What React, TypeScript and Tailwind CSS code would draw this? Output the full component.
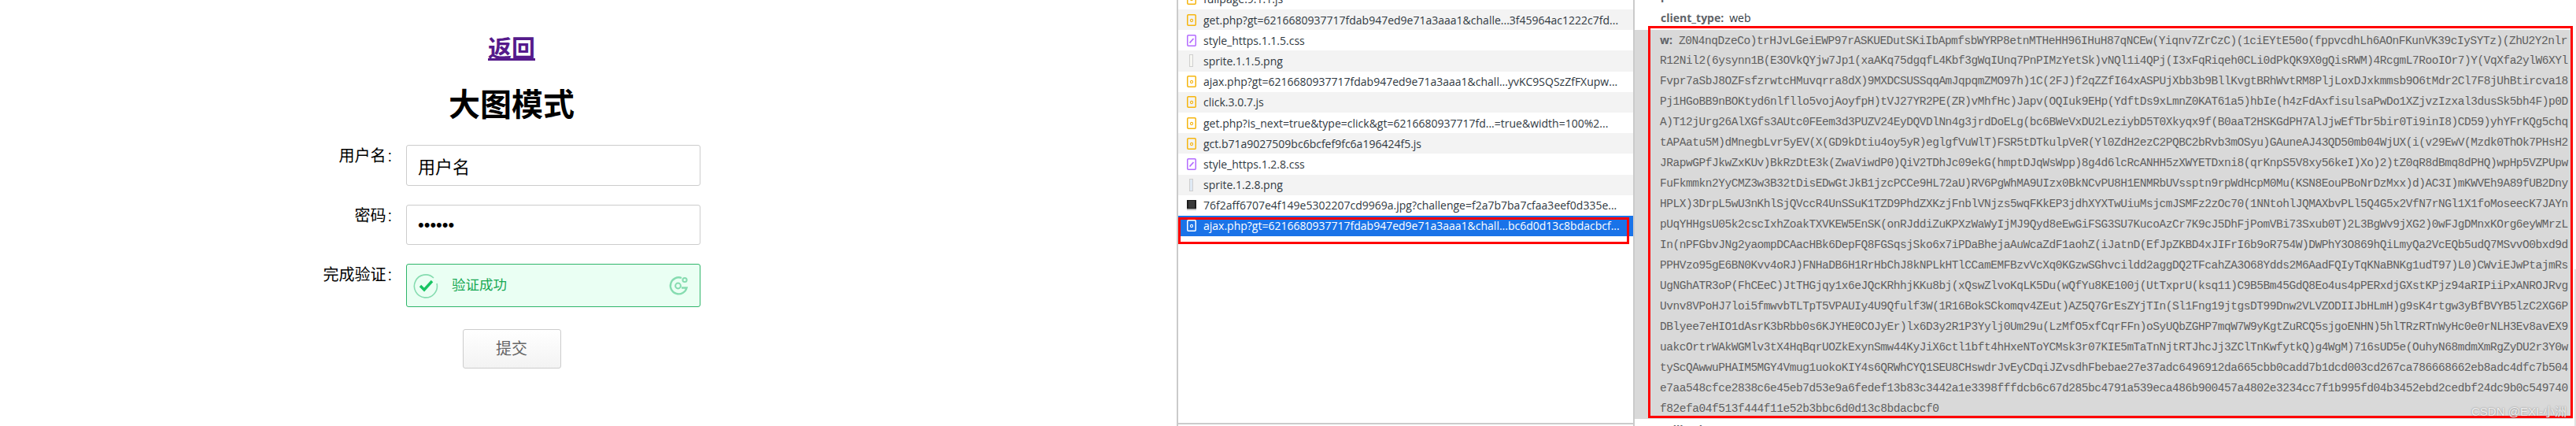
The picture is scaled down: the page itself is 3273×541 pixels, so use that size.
const cjk = 'font-["Liberation_Sans","Noto_Sans_CJK_SC",sans-serif]'

type FileKind = 'xhr' | 'css' | 'sprite' | 'sprite2' | 'jpg'

const files: { name: string; kind: FileKind }[] = [
  { name: 'fullpage.9.1.1.js', kind: 'xhr' },
  { name: 'get.php?gt=6216680937717fdab947ed9e71a3aaa1&challe...3f45964ac1222c7fd...', kind: 'xhr' },
  { name: 'style_https.1.1.5.css', kind: 'css' },
  { name: 'sprite.1.1.5.png', kind: 'sprite' },
  { name: 'ajax.php?gt=6216680937717fdab947ed9e71a3aaa1&chall...yvKC9SQSzZfFXupw...', kind: 'xhr' },
  { name: 'click.3.0.7.js', kind: 'xhr' },
  { name: 'get.php?is_next=true&type=click&gt=6216680937717fd...=true&width=100%2...', kind: 'xhr' },
  { name: 'gct.b71a9027509bc6bcfef9fc6a196424f5.js', kind: 'xhr' },
  { name: 'style_https.1.2.8.css', kind: 'css' },
  { name: 'sprite.1.2.8.png', kind: 'sprite2' },
  { name: '76f2aff6707e4f149e5302207cd9969a.jpg?challenge=f2a7b7ba7cfaa3eef0d335e...', kind: 'jpg' },
]

const payload = [
  'Z0N4nqDzeCo)trHJvLGeiEWP97rASKUEDutSKiIbApmfsbWYRP8etnMTHeHH96IHuH87qNCEw(Yiqnv7ZrCzC)(1ciEYtE50o(fppvcdhLh6AOnFKunVK39cIySYTz)(ZhU2Y2nlr',
  'R12Nil2(6ysynn1B(E3OVkQYjw7Jp1(xaAKq75dgqfL4Kbf3gWqIUnq7PnPIMzYetSk)vNQl1i4QPj(I3xFqRiqeh0CLi0dPkQK9X0gQisRWM)4RcgmL7RooIOr7)Y(VqXfa2ylW6XYl',
  'Fvpr7aSbJ8OZFsfzrwtcHMuvqrra8dX)9MXDCSUSSqqAmJqpqmZMO97h)1C(2FJ)f2qZZfI64xASPUjXbb3b9BllKvgtBRhWvtRM8PljLoxDJxkmmsb9O6tMdr2Cl7F8jUhBtircva18',
  'Pj1HGoBB9nBOKtyd6nlfllo5vojAoyfpH)tVJ27YR2PE(ZR)vMhfHc)Japv(OQIuk9EHp(YdftDs9xLmnZ0KAT61a5)hbIe(h4zFdAxfisulsaPwDo1XZjvzIzxal3dusSk5bh4F)p0D',
  'A)T12jUrg26AlXGfs3AUtc0FEem3d3PUZV24EyDQVDlNn4g3jrdDoELg(bc6BWeVxDU2LeziybD5T0Xkyqx9f(B0aaT2HSKGdPH7AlJjwEfTbr5bir0Ti9inI8)CD59)yhYFrKQg5chq',
  'tAPAatu5M)dMnegbLvr5yEV(X(GD9kDtiu4oy5yR)eglgfVuWlT)FSR5tDTkulpVeR(Yl0ZdH2ezC2PQBC2bRvb3mOSyu)GAuneAJ43QD50mb04WjUX(i(v29EwV(Mzdk0ThOk7PHsH2',
  'JRapwGPfJkwZxKUv)BkRzDtE3k(ZwaViwdP0)QiV2TDhJc09ekG(hmptDJqWsWpp)8g4d6lcRcANHH5zXWYETDxni8(qrKnpS5V8xy56keI)Xo)2)tZ0qR8dBmq8dPHQ)wpHp5VZPUpw',
  'FuFkmmkn2YyCMZ3w3B32tDisEDwGtJkB1jzcPCCe9HL72aU)RV6PgWhMA9UIzx0BkNCvPU8H1ENMRbUVssptn9rpWdHcpM0Mu(KSN8EouPBoNrDzMxx)d)AC3I)mKWVEh9A89fUB2Dny',
  'HPLX)3DrpL5wU3nKhlSjQVccR4UnSSuK1TZD9PhdZXKzjFnblVNjzs5wqFKkEP3jdhXYXTwUiuMsjcmJSMFz2zOc70(1NNtohlJQMAXbvPLl5Q4G5x2VfN7rNGl1X1foMoseecK7JAYn',
  'pUqYHHgsU05k2cscIxhZoakTXVKEW5EnSK(onRJddiZuKPXzWaWyIjMJ9Qyd8eEwGiFSG3SU7KucoAzCr7K9cJ5DhFjPomVBi73Sxub0T)2L3BgWv9jXG2)0wFJgDMnxKOrg6eyWMrzL',
  'In(nPFGbvJNg2yaompDCAacHBk6DepFQ8FGSqsjSko6x7iPDaBhejaAuWcaZdF1aohZ(iJatnD(EfJpZKBD4xJIFrI6b9oR754W)DWPhY3O869hQiLmyQa2VcEQb5udQ7MSvvO0bxd9d',
  'PPHVzo95gE6BN0Kvv4oRJ)FNHaDB6H1RrHbChJ8kNPLkHTlCCamEMFBzvVcXq0KGzwSGhvcildd2aggDQ2TFcahZA3O68Ydds2M6AadFQIyTqKNaBNKg1udT97)L0)CWviEJwPtajmRs',
  'UgNGhATR3oP(FhCEeC)JtTHGjqy1x6eJQcKRhhjKKu8bj(xQswZlvoKqLK5Du(wQfYu8KE100j(UtTxprU(ksq11)C9B5Bm45GdQ8Eo4us4pPERxdjGXstKPjz94aRIPiiPxANROJRvg',
  'Uvnv8VPoHJ7loi5fmwvbTLTpT5VPAUIy4U9Qfulf3W(1R16BokSCkomqv4ZEut)AZ5Q7GrEsZYjTIn(Sl1Fng19jtgsDT99Dnw2VLVZODIIJbHLmH)g9sK4rtgw3yBfBVYB5lzC2XG6P',
  'DBlyee7eHIO1dAsrK3bRbb0s6KJYHE0COJyEr)lx6D3y2R1P3Yylj0Um29u(LzMfO5xfCqrFFn)oSyUQbZGHP7mqW7W9yKgtZuRCQ5sjgoENHN)5hlTRzRTnWyHc0e0rNLH3Ev8avEX9',
  'uakcOrtrWAkWGMlv3tX4HqBqrUOZkExynSmw44KyJiX6ctl1bft4hHxeNToYCMsk3r07KIE5mTaTnNjtRTJhcJj3ZClTnKwfytkQ)g4WgM)716sUD5e(OuhyN68mdmXmRgZyDU2r3Y0w',
  'tyScQAwwuPHAIM5MGY4Vmug1uokoKIY4s6QRWhCYQ1SEU8CHswdrJvEyCDqiJZvsdhFbebae27e37adc6496912da665cbb0cadd7b1dcd003cd267ca786668662eb8adc4dfc7b504',
  'e7aa548cfce2838c6e45eb7d53e9a6fedef13b83c3442a1e3398fffdcb6c67d285bc4791a539eca486b900457a4802e3234cc7f1b995fd04b3452ebd2cedbf24dc9b0c549740',
  'f82efa04f513f444f11e52b3bbc6d0d13c8bdacbcf0',
]

function FileIcon({ kind, white }: { kind: FileKind; white?: boolean }) {
  if (kind === 'jpg') {
    return (
      <svg width="12" height="14" viewBox="0 0 12 14">
        <rect width="12" height="13" fill="#1d1d1d" />
        <rect x="2" y="1" width="8" height="9" fill="#3a3a3a" />
        <rect y="11" width="12" height="2" fill="#bdbdbd" />
      </svg>
    )
  }
  if (kind === 'sprite' || kind === 'sprite2') {
    return (
      <svg width="12" height="16" viewBox="0 0 12 16">
        <rect x="3.5" y="0.5" width="4" height="15" fill={kind === 'sprite2' ? '#dfe9f5' : '#f7f7f2'} stroke="#cfcfcf" />
      </svg>
    )
  }
  const color = white ? '#ffffff' : kind === 'css' ? '#b36bff' : '#f5b50f'
  return (
    <svg width="12" height="15" viewBox="0 0 12 15" fill="none">
      <rect x="0.75" y="0.75" width="10.5" height="13.5" rx="1.2" stroke={color} strokeWidth="1.5" />
      {kind === 'css' ? (
        <path d="M3.5 10.5 L8.5 5" stroke={color} strokeWidth="1.8" />
      ) : (
        <circle cx="6" cy="8" r="1.6" stroke={color} strokeWidth="1.1" />
      )}
    </svg>
  )
}

function FileRow({ name, kind, odd }: { name: string; kind: FileKind; odd: boolean }) {
  return (
    <div className={`flex h-[26.2px] items-center pl-[11px] ${odd ? 'bg-[#f3f3f3]' : 'bg-white'}`}>
      <div className="flex w-[21px] shrink-0 items-center">
        <FileIcon kind={kind} />
      </div>
      <span className="whitespace-nowrap text-[#303942]">{name}</span>
    </div>
  )
}

function SuccessIcon() {
  return (
    <svg width="32" height="32" viewBox="0 0 32 32" fill="none">
      <path d="M26 6 A14.5 14.5 0 1 0 30 13" stroke="#86dcb0" strokeWidth="1.6" />
      <path d="M9 16 L14 21 L24 10" stroke="#19c463" strokeWidth="3.4" />
    </svg>
  )
}

function RefreshIcon() {
  return (
    <svg width="26" height="26" viewBox="0 0 26 26" fill="none" stroke="#86dcb0">
      <path d="M17 3 A10.5 10.5 0 1 0 23.5 15.5 L17 15.5" strokeWidth="2.4" />
      <circle cx="12.5" cy="13" r="3.4" strokeWidth="2" />
      <circle cx="21" cy="5.5" r="2.6" strokeWidth="2" />
    </svg>
  )
}

function FormRow({ label, children, className }: { label: string; children: React.ReactNode; className?: string }) {
  return (
    <div className={`flex ${className ?? ''}`}>
      <label className="w-[498px] text-right text-[20px] leading-[29px] text-black">
        {label}
        <span className="ml-[2px]">:</span>
      </label>
      <div className="ml-[18px] w-[374px]">{children}</div>
    </div>
  )
}

function LoginForm() {
  return (
    <div className={`h-full w-[1495px] shrink-0 bg-white ${cjk}`}>
      <div className="h-[80px] w-[1300px] pt-[44px] text-center leading-[36px]">
        <a href="#" className="text-[30px] font-bold text-[#551a8b] underline">返回</a>
      </div>
      <h1 className="mt-[30px] w-[1300px] text-center text-[40px] font-bold leading-[46px] text-black">大图模式</h1>
      <FormRow label="用户名" className="mt-[28px]">
        <input
          readOnly
          value="用户名"
          className="block h-[52px] w-full rounded-[3px] border border-[#ccc] px-[14px] text-[22px] text-black outline-none"
        />
      </FormRow>
      <FormRow label="密码" className="mt-[24px]">
        <input
          readOnly
          type="password"
          value="123456"
          className="block h-[51px] w-full rounded-[3px] border border-[#ccc] px-[14px] text-[22px] text-black outline-none"
        />
      </FormRow>
      <FormRow label="完成验证" className="mt-[24px]">
        <div className="flex h-[55px] items-center rounded-[3px] border border-[#2fb56a] bg-[#eafff3] pl-[8px] pr-[14px]">
          <SuccessIcon />
          <span className="ml-[17px] text-[17.5px] text-[#18a853]">验证成功</span>
          <div className="ml-auto flex">
            <RefreshIcon />
          </div>
        </div>
      </FormRow>
      <div className="mt-[28px] flex w-[1300px] justify-center">
        <button className="h-[50px] w-[125px] rounded-[3px] border border-[#ccc] bg-gradient-to-b from-white to-[#f3f3f3] text-[20px] text-[#666]">
          提交
        </button>
      </div>
    </div>
  )
}

function NetworkList() {
  return (
    <div className='relative flex h-full w-[582px] shrink-0 flex-col border-x-2 border-[#cbcbcb] bg-white font-["Open_Sans",sans-serif] text-[14px]'>
      <div className="min-h-0 flex-1 overflow-hidden">
        <div className="-mt-[14.2px]">
          {files.map((f, i) => (
            <FileRow key={i} name={f.name} kind={f.kind} odd={i % 2 === 1 && i < 10} />
          ))}
          <div className="flex h-[26.2px] items-center bg-[#1a73e8] pl-[11px] text-white">
            <div className="flex w-[21px] shrink-0 items-center">
              <FileIcon kind="xhr" white />
            </div>
            <span className="whitespace-nowrap">ajax.php?gt=6216680937717fdab947ed9e71a3aaa1&amp;chall...bc6d0d13c8bdacbcf...</span>
          </div>
        </div>
      </div>
      <div className="h-[4px] shrink-0 border-t-2 border-[#cbcbcb]" />
      {/* highlight drawn over the screenshot */}
      <div className="absolute left-0 top-[276px] h-[34px] w-[573px] border-[3px] border-[#ff0000]" />
    </div>
  )
}

function PayloadPanel() {
  return (
    <div className='relative h-full min-w-0 flex-1 overflow-hidden bg-white font-["Open_Sans",sans-serif] text-[14px] text-[#303942]'>
      <div className="-mt-[18px] pl-[33px] leading-[26px]">
        <div className="h-[28px]">
          <span className="font-bold text-[#5f6368]">pt:</span> 0
        </div>
        <div className="h-[28px]">
          <span className="font-bold text-[#5f6368]">client_type:</span>
          <span className="ml-[7px]">web</span>
        </div>
      </div>
      <div className="mr-[4px] bg-[#d9d9d9] pl-[32px] font-['Liberation_Mono',monospace] text-[14.5px] leading-[26px] tracking-[-0.46px] text-[#5f5f5f]">
        {payload.map((line, i) => (
          <div key={i} className="h-[26px] whitespace-nowrap">
            {i === 0 && <span className='mr-[8px] font-["Open_Sans",sans-serif] text-[14px] font-bold tracking-normal text-[#5f6368]'>w:</span>}
            {line}
          </div>
        ))}
      </div>
      <div className="mt-[1px] pl-[33px] font-bold leading-[26px] text-[#5f6368]">callback:</div>
      {/* highlight drawn over the screenshot */}
      <div className="absolute left-[17px] top-[33px] h-[498px] w-[1175px] border-[3px] border-[#ff0000]" />
      <div className={`absolute left-[1063px] top-[512px] text-[15px] text-[#efefef] [text-shadow:0_0_2px_#777] ${cjk}`}>CSDN @EXI-小洲</div>
      <div className="absolute right-0 top-[342px] bottom-0 w-[2px] bg-[#e2e2e2]" />
    </div>
  )
}

export default function App() {
  return (
    <div className="flex h-[541px] w-[3273px] overflow-hidden bg-white">
      <LoginForm />
      <NetworkList />
      <PayloadPanel />
    </div>
  )
}
